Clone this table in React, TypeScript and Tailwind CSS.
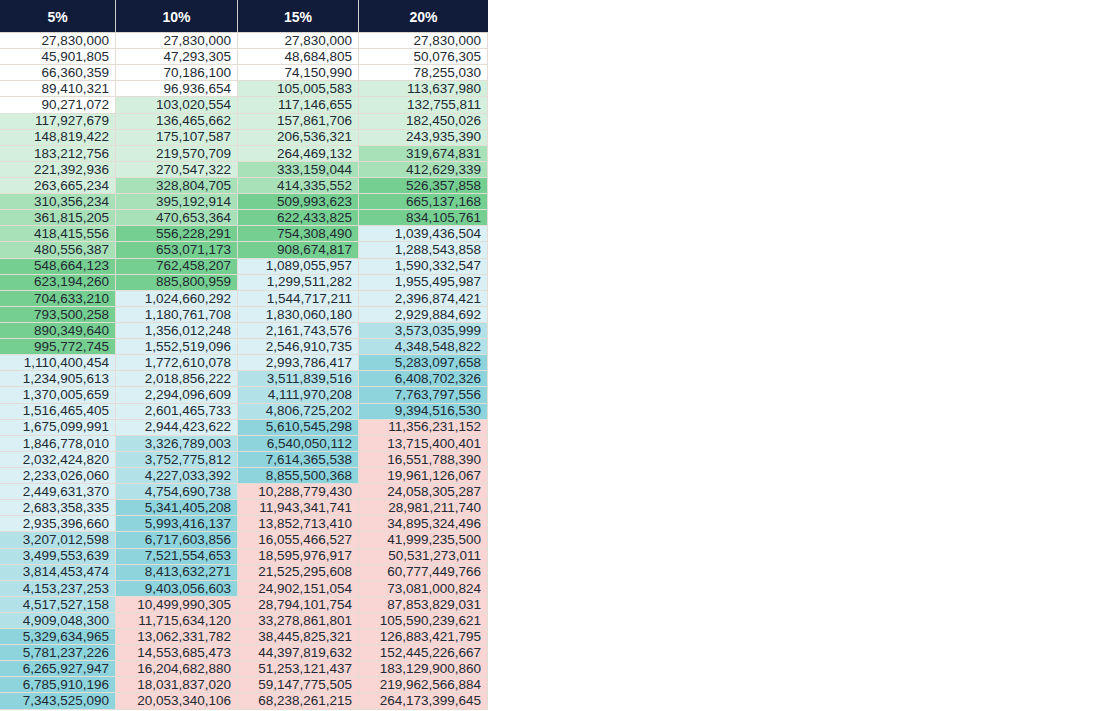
const rows: string[][] = [
  ["27,830,000", "27,830,000", "27,830,000", "27,830,000"],
  ["45,901,805", "47,293,305", "48,684,805", "50,076,305"],
  ["66,360,359", "70,186,100", "74,150,990", "78,255,030"],
  ["89,410,321", "96,936,654", "105,005,583", "113,637,980"],
  ["90,271,072", "103,020,554", "117,146,655", "132,755,811"],
  ["117,927,679", "136,465,662", "157,861,706", "182,450,026"],
  ["148,819,422", "175,107,587", "206,536,321", "243,935,390"],
  ["183,212,756", "219,570,709", "264,469,132", "319,674,831"],
  ["221,392,936", "270,547,322", "333,159,044", "412,629,339"],
  ["263,665,234", "328,804,705", "414,335,552", "526,357,858"],
  ["310,356,234", "395,192,914", "509,993,623", "665,137,168"],
  ["361,815,205", "470,653,364", "622,433,825", "834,105,761"],
  ["418,415,556", "556,228,291", "754,308,490", "1,039,436,504"],
  ["480,556,387", "653,071,173", "908,674,817", "1,288,543,858"],
  ["548,664,123", "762,458,207", "1,089,055,957", "1,590,332,547"],
  ["623,194,260", "885,800,959", "1,299,511,282", "1,955,495,987"],
  ["704,633,210", "1,024,660,292", "1,544,717,211", "2,396,874,421"],
  ["793,500,258", "1,180,761,708", "1,830,060,180", "2,929,884,692"],
  ["890,349,640", "1,356,012,248", "2,161,743,576", "3,573,035,999"],
  ["995,772,745", "1,552,519,096", "2,546,910,735", "4,348,548,822"],
  ["1,110,400,454", "1,772,610,078", "2,993,786,417", "5,283,097,658"],
  ["1,234,905,613", "2,018,856,222", "3,511,839,516", "6,408,702,326"],
  ["1,370,005,659", "2,294,096,609", "4,111,970,208", "7,763,797,556"],
  ["1,516,465,405", "2,601,465,733", "4,806,725,202", "9,394,516,530"],
  ["1,675,099,991", "2,944,423,622", "5,610,545,298", "11,356,231,152"],
  ["1,846,778,010", "3,326,789,003", "6,540,050,112", "13,715,400,401"],
  ["2,032,424,820", "3,752,775,812", "7,614,365,538", "16,551,788,390"],
  ["2,233,026,060", "4,227,033,392", "8,855,500,368", "19,961,126,067"],
  ["2,449,631,370", "4,754,690,738", "10,288,779,430", "24,058,305,287"],
  ["2,683,358,335", "5,341,405,208", "11,943,341,741", "28,981,211,740"],
  ["2,935,396,660", "5,993,416,137", "13,852,713,410", "34,895,324,496"],
  ["3,207,012,598", "6,717,603,856", "16,055,466,527", "41,999,235,500"],
  ["3,499,553,639", "7,521,554,653", "18,595,976,917", "50,531,273,011"],
  ["3,814,453,474", "8,413,632,271", "21,525,295,608", "60,777,449,766"],
  ["4,153,237,253", "9,403,056,603", "24,902,151,054", "73,081,000,824"],
  ["4,517,527,158", "10,499,990,305", "28,794,101,754", "87,853,829,031"],
  ["4,909,048,300", "11,715,634,120", "33,278,861,801", "105,590,239,621"],
  ["5,329,634,965", "13,062,331,782", "38,445,825,321", "126,883,421,795"],
  ["5,781,237,226", "14,553,685,473", "44,397,819,632", "152,445,226,667"],
  ["6,265,927,947", "16,204,682,880", "51,253,121,437", "183,129,900,860"],
  ["6,785,910,196", "18,031,837,020", "59,147,775,505", "219,962,566,884"],
  ["7,343,525,090", "20,053,340,106", "68,238,261,215", "264,173,399,645"],
];

const headers = ["5%", "10%", "15%", "20%"];
const widths = ["w-[116px]", "w-[122px]", "w-[121px]", "w-[129px]"];

// banded fill by value, same thresholds in every column
function fill(text: string) {
  const v = Number(text.replace(/,/g, ""));
  if (v >= 10e9) return "bg-[#f9d6d3]";
  if (v >= 5e9) return "bg-[#8dd4dc]";
  if (v >= 3e9) return "bg-[#b2e2e8]";
  if (v >= 1e9) return "bg-[#dbf0f4]";
  if (v >= 5e8) return "bg-[#75cf90]";
  if (v >= 3e8) return "bg-[#a8e0b8]";
  if (v >= 1e8) return "bg-[#d4efdc]";
  return "bg-white";
}

export default function App() {
  return (
    <div className="min-h-screen bg-white font-['Liberation_Sans',Arial,sans-serif]">
      <div className="w-[488px]">
        <div className="flex h-[33px] bg-[#111c3a] border-b border-[#d9d3cc]">
          {headers.map((h, i) => (
            <div
              key={h}
              className={`${widths[i]} flex items-center justify-center pt-[3px] text-[14px] font-bold text-white ${
                i < 3 ? "border-r border-[#cfcfcf]" : ""
              }`}
            >
              {h}
            </div>
          ))}
        </div>
        {rows.map((r, ri) => (
          <div key={ri} className="flex h-[16.12px]">
            {r.map((c, ci) => (
              <div
                key={ci}
                className={`${widths[ci]} ${fill(c)} flex items-center justify-end pr-[6px] border-b border-r border-[#e4ddd6] text-[13.5px] leading-none text-[#222a33]`}
              >
                {c}
              </div>
            ))}
          </div>
        ))}
      </div>
    </div>
  );
}
